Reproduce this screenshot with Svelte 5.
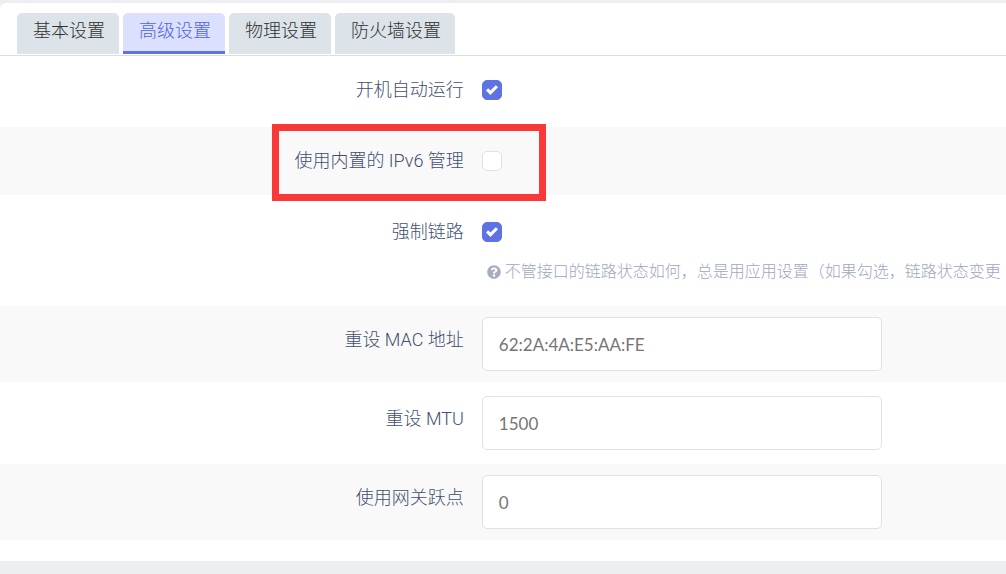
<script>
  const tabs = ['基本设置', '高级设置', '物理设置', '防火墙设置'];
  let active = $state(1);
  let autostart = $state(true);
  let ipv6 = $state(false);
  let forceLink = $state(true);
  let mac = $state('');
  let mtu = $state('');
  let metric = $state('');
</script>

<main class="panel">
  <nav class="tabs">
    {#each tabs as tab, i}
      <button type="button" class="tab" class:active={i === active} onclick={() => (active = i)}>{tab}</button>
    {/each}
  </nav>

  <form class="rows">
    <div class="row">
      <label for="autostart">开机自动运行</label>
      <div class="field">
        <div class="control"><input id="autostart" type="checkbox" bind:checked={autostart} /></div>
      </div>
    </div>

    <div class="row">
      <label for="ipv6">使用内置的 IPv6 管理</label>
      <div class="field">
        <div class="control"><input id="ipv6" type="checkbox" bind:checked={ipv6} /></div>
        <span class="marker"></span>
      </div>
    </div>

    <div class="row">
      <label for="force-link">强制链路</label>
      <div class="field">
        <div class="control"><input id="force-link" type="checkbox" bind:checked={forceLink} /></div>
        <p class="hint">
          <svg viewBox="0 0 512 512" aria-hidden="true">
            <path d="M504 256c0 137-111 248-248 248S8 393 8 256 119 8 256 8s248 111 248 248zM262.7 90c-54.5 0-89.3 23-116.5 63.8-3.5 5.300-2.400 12.400 2.700 16.300l34.700 26.300c5.200 3.900 12.600 3 16.700-2.100 17.900-22.700 30.100-35.800 57.300-35.800 20.400 0 45.700 13.100 45.700 33 0 15-12.400 22.700-32.500 34C247.100 238.500 216 254.900 216 296v4c0 6.600 5.400 12 12 12h56c6.600 0 12-5.400 12-12v-1.300c0-28.500 83.200-29.600 83.200-106.700 0-58-60.200-102-116.500-102zM256 338c-25.400 0-46 20.600-46 46s20.600 46 46 46 46-20.600 46-46-20.600-46-46-46z" />
          </svg>
          <span>不管接口的链路状态如何，总是用应用设置（如果勾选，链路状态变更</span>
        </p>
      </div>
    </div>

    <div class="row">
      <label for="mac">重设 MAC 地址</label>
      <div class="field"><input id="mac" class="text" type="text" placeholder="62:2A:4A:E5:AA:FE" bind:value={mac} /></div>
    </div>

    <div class="row">
      <label for="mtu">重设 MTU</label>
      <div class="field"><input id="mtu" class="text" type="text" placeholder="1500" bind:value={mtu} /></div>
    </div>

    <div class="row">
      <label for="metric">使用网关跃点</label>
      <div class="field"><input id="metric" class="text" type="text" placeholder="0" bind:value={metric} /></div>
    </div>
  </form>
</main>

<style>
  :global(body) {
    background: #eceef2;
    padding: 3px 0 13px;
    font-family: Roboto, 'Noto Sans CJK SC', sans-serif;
    font-size: 18px;
    font-weight: 300;
  }

  .panel {
    padding-bottom: 21px;
    background: #fff;
    border-radius: 6px 0 0 0;
    overflow: hidden;
  }

  .tabs {
    display: flex;
    gap: 4px;
    padding: 10px 17px 1px;
    border-bottom: 1px solid #dcdddf;
  }

  .tab {
    height: 41px;
    padding: 0 14px 6px 16px;
    border: 0;
    border-bottom: 0 solid #5e72e4;
    border-radius: 5px 5px 0 0;
    background: #dce3e9;
    color: #303030;
    font: inherit;
    line-height: 35px;
    white-space: nowrap;
    cursor: pointer;
  }

  .tab.active {
    padding-bottom: 3px;
    border-bottom-width: 3px;
    background: #dce0ff;
    color: #5064dd;
  }

  .rows {
    display: flex;
    flex-direction: column;
    gap: 3px;
  }

  .row {
    display: grid;
    grid-template-columns: 46% minmax(0, 1fr);
    column-gap: 18px;
    padding: 11px 0 11px 2px;
  }

  .row:nth-child(even) {
    background: #f9f9f9;
  }

  label {
    color: #424f70;
    line-height: 46px;
    text-align: right;
  }

  .field {
    position: relative;
  }

  .control {
    display: flex;
    align-items: center;
    height: 46px;
  }

  input[type='checkbox'] {
    appearance: none;
    width: 20px;
    height: 20px;
    margin: 0;
    border: 1px solid #dee2e6;
    border-radius: 5px;
    background: #fff;
  }

  input[type='checkbox']:checked {
    border-color: #5e72e4;
    background: #5e72e4 url("data:image/svg+xml,%3Csvg xmlns='http://www.w3.org/2000/svg' viewBox='0 0 8 8'%3E%3Cpath fill='%23fff' d='M6.564.75l-3.590 3.612-1.538-1.550L0 4.260 2.974 7.250 8 2.193z'/%3E%3C/svg%3E") center / 12px 12px no-repeat;
  }

  .marker {
    position: absolute;
    top: -14px;
    left: -210px;
    box-sizing: border-box;
    width: 274px;
    height: 77px;
    border: 7px solid #fb3838;
    pointer-events: none;
  }

  .hint {
    display: flex;
    align-items: center;
    gap: 4px;
    margin: 0;
    padding: 5px 0 8px 5px;
    overflow: hidden;
    color: #9ea7bb;
    font-size: 16px;
    line-height: 24px;
    white-space: nowrap;
  }

  .hint svg {
    flex: none;
    width: 14px;
    height: 14px;
    fill: #a5adc0;
  }

  .text {
    box-sizing: border-box;
    display: block;
    width: 400px;
    max-width: 100%;
    height: 54px;
    padding: 0 16px;
    border: 1px solid #dee2e6;
    border-radius: 5px;
    background: #fff;
    color: #525f7f;
    font: 400 17px Lato, 'Noto Sans CJK SC', sans-serif;
  }

  .text::placeholder {
    color: #757575;
    opacity: 1;
  }
</style>
